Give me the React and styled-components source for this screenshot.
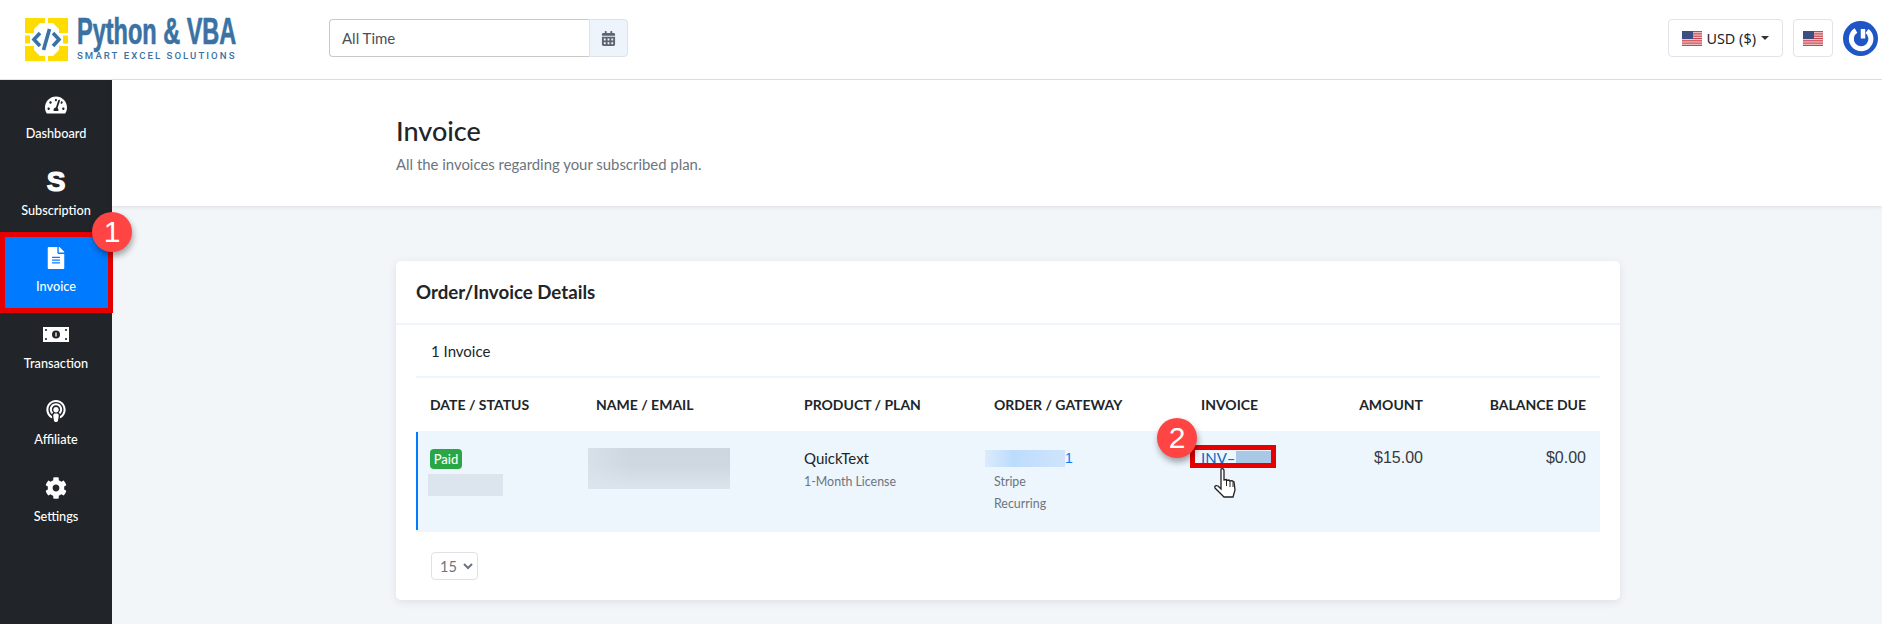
import React from 'react';
import styled, { createGlobalStyle } from 'styled-components';
import { FaCalendarAlt, FaTachometerAlt, FaFileAlt, FaPodcast, FaCog } from 'react-icons/fa';

const Global = createGlobalStyle`
  html, body { margin: 0; padding: 0; }
  body { background: #f3f6f9; font-family: Lato, "Noto Sans", sans-serif; color: #212529; width: 1882px; height: 624px; overflow: hidden; }
  * { box-sizing: border-box; }
`;

const Page = styled.div`display:flex;flex-direction:column;width:1882px;height:624px;position:relative;overflow:hidden;`;
const Header = styled.header`height:80px;flex:none;background:#fff;border-bottom:1px solid #dbe4f5;display:flex;align-items:center;padding:0 4px 3px 25px;`;
const Logo = styled.div`display:flex;gap:9px;width:304px;flex:none;align-items:center;padding-top:3px;`;
const LogoText = styled.div`display:flex;flex-direction:column;width:158px;`;
const LogoTitle = styled.div`font-family:"Liberation Sans",sans-serif;font-weight:700;font-size:36.5px;line-height:30px;color:#3a72a3;-webkit-text-stroke:.7px #3a72a3;transform:scaleX(.644);transform-origin:left;white-space:nowrap;`;
const LogoSub = styled.div`font-family:Roboto,sans-serif;font-weight:500;font-size:9.6px;line-height:12px;letter-spacing:2.05px;color:#3a72a3;white-space:nowrap;margin-top:3px;`;
const DateGroup = styled.div`display:flex;width:299px;height:38px;`;
const DateInput = styled.div`flex:1;border:1px solid #c9c9c9;border-right:0;border-radius:4px 0 0 4px;display:flex;align-items:center;padding:0 12px;font-size:15px;color:#495057;`;
const DateAddon = styled.div`width:39px;background:#edf4fc;border:1px solid #dee2e6;border-radius:0 4px 4px 0;display:flex;align-items:center;justify-content:center;color:#5d6670;font-size:15px;`;
const HeaderRight = styled.div`margin-left:auto;display:flex;align-items:center;`;
const OutlineBtn = styled.div`height:38px;border:1px solid #e0e3e8;border-radius:4px;display:flex;align-items:center;gap:4px;padding:0 ${p => p.$px}px;font-size:14.4px;color:#212529;font-family:"Noto Sans",sans-serif;margin-right:10px;`;
const Caret = styled.span`width:0;height:0;border:4px solid transparent;border-top-color:#333;border-bottom:0;margin-left:1px;`;
const Body = styled.div`flex:1;display:flex;min-height:0;`;
const Sidebar = styled.nav`width:112px;flex:none;background:#212529;display:flex;flex-direction:column;`;
const NavItem = styled.div`height:76.6px;display:flex;flex-direction:column;align-items:center;padding-top:13px;color:#fff;font-size:12.7px;font-weight:500;background:${p => (p.$active ? '#007bff' : 'transparent')};`;
const NavIcon = styled.div`height:24px;font-size:22px;display:flex;align-items:center;justify-content:center;margin-bottom:8px;`;
const BigS = styled.span`font-family:"Liberation Sans",sans-serif;font-weight:700;font-size:28px;line-height:24px;-webkit-text-stroke:1.2px #fff;`;
const Main = styled.main`flex:1;display:flex;flex-direction:column;`;
const PageHead = styled.section`height:126px;background:#fff;box-shadow:0 1px 4px rgba(60,70,90,.14);padding:35px 0 0 284px;`;
const PageTitle = styled.h1`margin:0;font-size:27px;line-height:32px;font-weight:500;color:#212529;`;
const PageSub = styled.p`margin:7px 0 0;font-size:14.9px;line-height:20px;color:#6c757d;`;
const Content = styled.div`padding:55px 0 0 284px;`;
const Card = styled.section`width:1224px;height:339px;background:#fff;border-radius:5px;box-shadow:0 2px 8px rgba(60,70,90,.12);`;
const CardHead = styled.div`height:64px;padding:0 20px;display:flex;align-items:center;border-bottom:2px solid #eef5fd;font-size:18.7px;font-weight:700;color:#212529;`;
const TableWrap = styled.div`padding:0 20px;`;
const CountRow = styled.div`height:53px;border-bottom:2px solid #eef5fd;display:flex;align-items:center;padding-left:15px;font-size:15px;color:#212529;`;
const Row = styled.div`display:grid;grid-template-columns:166px 208px 190px 207px 113px 137px 163px;`;
const HeadRow = styled(Row)`height:53px;align-items:center;`;
const HeadCell = styled.div`font-size:14px;font-weight:700;color:#212529;padding-left:${p => (p.$right ? 0 : 14)}px;padding-right:${p => (p.$right ? 14 : 0)}px;text-align:${p => (p.$right ? 'right' : 'left')};white-space:nowrap;`;
const DataRow = styled(Row)`height:101px;background:#edf5fd;position:relative;&::before{content:"";position:absolute;left:0;top:1px;bottom:2px;width:2px;background:#007bff;}`;
const Cell = styled.div`padding:17px ${p => (p.$right ? 14 : 0)}px 0 ${p => (p.$right ? 0 : 14)}px;font-size:15px;line-height:20px;text-align:${p => (p.$right ? 'right' : 'left')};color:#212529;`;
const Money = styled(Cell)`font-family:"Liberation Sans",sans-serif;font-size:16px;color:#343a40;`;
const Paid = styled.span`display:block;width:32px;height:20px;line-height:20px;text-align:center;border-radius:4px;background:#28a745;color:#fff;font-size:13px;font-weight:500;margin-top:1px;`;
const DateBlur = styled.div`width:75px;height:22px;background:#dce4ee;margin:5px 0 0 -2px;`;
const NameBlur = styled.div`width:142px;height:41px;margin:0 0 0 -8px;background:linear-gradient(90deg,rgba(220,228,238,.7),rgba(205,213,223,0) 30%),linear-gradient(180deg,#cdd5df 0%,#cfd7e1 45%,#dce4ee 100%);`;
const Sub = styled.div`font-size:12.4px;line-height:20px;color:#6c757d;margin-top:${p => p.$mt}px;`;
const OrderId = styled.div`display:flex;align-items:center;height:20px;margin-left:-9px;color:#007bff;font-family:"Liberation Sans",sans-serif;font-size:14px;`;
const OrderBlur = styled.div`width:80px;height:17px;background:linear-gradient(90deg,#dcebfb,#bcdcfd 35%,#cfe4fb 100%);`;
const InvoiceLink = styled.div`display:flex;align-items:center;height:20px;color:#0d6ac0;font-size:15px;white-space:nowrap;`;
const InvoiceBlur = styled.div`width:36px;height:14px;background:#a9c8e6;`;
const Footer = styled.div`padding:20px 15px;`;
const PageSelect = styled.div`width:47px;height:28px;border:1px solid #dee2e6;border-radius:4px;display:flex;align-items:center;padding-left:8px;gap:6px;font-size:14.5px;color:#6c757d;`;
const Badge = styled.div`position:absolute;left:${p => p.$x}px;top:${p => p.$y}px;width:40px;height:40px;border-radius:50%;background:#ff4444;color:#fff;font-family:"Liberation Sans",sans-serif;font-size:30px;display:flex;align-items:center;justify-content:center;box-shadow:1px 4px 6px rgba(0,0,0,.35);z-index:3;`;
const RedBox = styled.div`position:absolute;left:${p => p.$x}px;top:${p => p.$y}px;width:${p => p.$w}px;height:${p => p.$h}px;border:5px solid #e60000;z-index:2;`;
const Hand = styled.svg`position:absolute;left:1212px;top:467px;z-index:4;`;

const Flag = () => (
  <svg width="20" height="15" viewBox="0 0 20 15">
    <rect width="20" height="15" fill="#f5d5d5" />
    {[0, 2.3, 4.6, 6.9, 9.2, 11.5, 13.8].map(y => <rect key={y} y={y} width="20" height="1.2" fill="#c8454f" />)}
    <rect width="11" height="8" fill="#3d4f80" />
  </svg>
);

const LogoMark = () => (
  <svg width="43" height="43" viewBox="0 0 43 43">
    <path d="M0 0H20V5H15L9 11V15H0Z M23 0H43V15H34V11L28 5H23Z M0 28H9V32L15 38H20V43H0Z M43 28H34V32L28 38H23V43H43Z" fill="#ffdc00" />
    <path d="M0 17.500H5V25.500H0Z M38 17.500H43V25.500H38Z" fill="#ffdc00" />
    <path d="M15 15L9 21.500L15 28 M28 15L34 21.500L28 28" fill="none" stroke="#3a72a3" strokeWidth="3.600" />
    <path d="M24.500 11L18.500 32" stroke="#3a72a3" strokeWidth="3.600" />
  </svg>
);

const Power = () => (
  <svg width="35" height="35" viewBox="0 0 35 35">
    <circle cx="17.500" cy="17.500" r="17.500" fill="#1f55c4" />
    <path d="M13 9.500A9.800 9.800 0 1 0 24 10" fill="none" stroke="#fff" strokeWidth="5" />
    <path d="M20 8V17.500" stroke="#fff" strokeWidth="4.500" />
  </svg>
);

const MoneyIcon = () => (
  <svg width="26" height="15" viewBox="0 0 26 15">
    <rect width="26" height="15" fill="#fff" />
    <circle cx="13" cy="7.500" r="4" fill="#212529" />
    <path d="M13 5.500v4" stroke="#fff" strokeWidth="1.300" />
    {[[3, 3], [23, 3], [3, 12], [23, 12]].map(([x, y]) => <circle key={x + '-' + y} cx={x} cy={y} r="1.100" fill="#212529" />)}
  </svg>
);

const Chevron = () => (
  <svg width="10" height="7" viewBox="0 0 10 7"><path d="M1 1l4 4 4-4" fill="none" stroke="#6c757d" strokeWidth="2" /></svg>
);

const items = [
  ['Dashboard', <FaTachometerAlt />],
  ['Subscription', <BigS>S</BigS>],
  ['Invoice', <FaFileAlt />, true],
  ['Transaction', <MoneyIcon />],
  ['Affiliate', <FaPodcast />],
  ['Settings', <FaCog />],
];

const columns = [
  ['DATE / STATUS'], ['NAME / EMAIL'], ['PRODUCT / PLAN'], ['ORDER / GATEWAY'], ['INVOICE'], ['AMOUNT', true], ['BALANCE DUE', true],
];

function InvoiceTable() {
  return (
    <TableWrap>
      <CountRow>1 Invoice</CountRow>
      <HeadRow>
        {columns.map(([label, right]) => <HeadCell key={label} $right={right}>{label}</HeadCell>)}
      </HeadRow>
      <DataRow>
        <Cell><Paid>Paid</Paid><DateBlur /></Cell>
        <Cell><NameBlur /></Cell>
        <Cell>QuickText<Sub $mt={4}>1-Month License</Sub></Cell>
        <Cell>
          <OrderId><OrderBlur />1</OrderId>
          <Sub $mt={4}>Stripe</Sub>
          <Sub $mt={2}>Recurring</Sub>
        </Cell>
        <Cell><InvoiceLink>INV–<InvoiceBlur /></InvoiceLink></Cell>
        <Money $right>$15.00</Money>
        <Money $right>$0.00</Money>
      </DataRow>
      <Footer><PageSelect>15<Chevron /></PageSelect></Footer>
    </TableWrap>
  );
}

export default function App() {
  return (
    <Page>
      <Global />
      <Header>
        <Logo>
          <LogoMark />
          <LogoText>
            <LogoTitle>Python &amp; VBA</LogoTitle>
            <LogoSub>SMART EXCEL SOLUTIONS</LogoSub>
          </LogoText>
        </Logo>
        <DateGroup>
          <DateInput>All Time</DateInput>
          <DateAddon><FaCalendarAlt /></DateAddon>
        </DateGroup>
        <HeaderRight>
          <OutlineBtn $px={13}><Flag />USD ($)<Caret /></OutlineBtn>
          <OutlineBtn $px={9}><Flag /></OutlineBtn>
          <Power />
        </HeaderRight>
      </Header>
      <Body>
        <Sidebar>
          {items.map(([label, icon, active]) => (
            <NavItem key={label} $active={active}>
              <NavIcon>{icon}</NavIcon>
              {label}
            </NavItem>
          ))}
        </Sidebar>
        <Main>
          <PageHead>
            <PageTitle>Invoice</PageTitle>
            <PageSub>All the invoices regarding your subscribed plan.</PageSub>
          </PageHead>
          <Content>
            <Card>
              <CardHead>Order/Invoice Details</CardHead>
              <InvoiceTable />
            </Card>
          </Content>
        </Main>
      </Body>
      <RedBox $x={0} $y={232} $w={113} $h={81} />
      <Badge $x={92} $y={212}>1</Badge>
      <Badge $x={1157} $y={418}>2</Badge>
      <RedBox $x={1190} $y={445} $w={86} $h={23} />
      <Hand width="28" height="34" viewBox="0 0 26 34">
        <path d="M8 2c1.500-1 3 0 3 1.500V13l2.500-.5 .5 1 2-.5 1 1 2-.3 2 1.300 1 8-2 7H11L8 27 2 21c-1-2 1-3 3-2l3 3V3z" fill="#fff" stroke="#222" strokeWidth="1.300" />
        <path d="M13.500 13v6M17 14v6M20 15v5" stroke="#222" strokeWidth="1" fill="none" />
      </Hand>
    </Page>
  );
}
